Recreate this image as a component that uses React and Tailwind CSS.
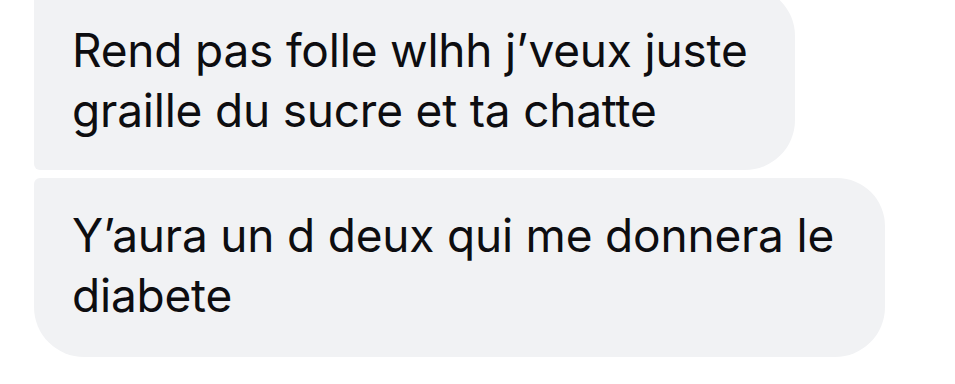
export default function App() {
  return (
    <div className="w-[955px] h-[384px] overflow-hidden bg-white font-['Inter',_'Liberation_Sans',_sans-serif] text-[#0d0d10]">
      <div className="flex flex-col items-start gap-[8px] pl-[34px] -mt-[14px]">
        <div className="w-[761px] bg-[#f1f2f4] rounded-tr-[50px] rounded-br-[50px] rounded-bl-[6px] pl-[38px] pr-[20px] pt-[34px] pb-[30px] text-[46px] leading-[60px] tracking-[-0.2px]">
          Rend pas folle wlhh j’veux juste
          <br />
          graille du sucre et ta chatte
        </div>
        <div className="w-[851px] bg-[#f1f2f4] rounded-tl-[6px] rounded-tr-[48px] rounded-br-[50px] rounded-bl-[50px] pl-[38px] pr-[20px] pt-[27px] pb-[32px] text-[46px] leading-[60px] tracking-[-0.2px]">
          Y’aura un d deux qui me donnera le
          <br />
          diabete
        </div>
      </div>
    </div>
  );
}
